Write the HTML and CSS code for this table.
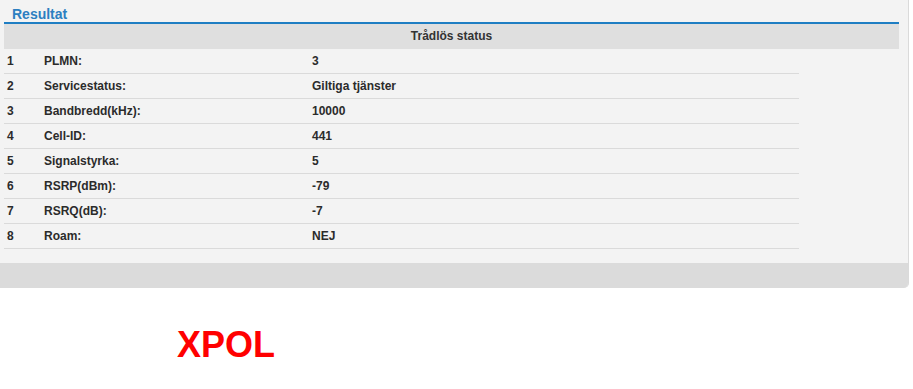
FILE: index.html
```html
<!DOCTYPE html>
<html>
<head>
<meta charset="utf-8">
<link rel="stylesheet" href="styles.css">
</head>
<body>
<div class="panel">
  <div class="title">Resultat</div>
  <div class="section">
    <div class="section-head">Trådlös status</div>
    <table class="grid">
      <tr><td class="num">1</td><td class="label">PLMN:</td><td class="val">3</td></tr>
      <tr><td class="num">2</td><td class="label">Servicestatus:</td><td class="val">Giltiga tjänster</td></tr>
      <tr><td class="num">3</td><td class="label">Bandbredd(kHz):</td><td class="val">10000</td></tr>
      <tr><td class="num">4</td><td class="label">Cell-ID:</td><td class="val">441</td></tr>
      <tr><td class="num">5</td><td class="label">Signalstyrka:</td><td class="val">5</td></tr>
      <tr><td class="num">6</td><td class="label">RSRP(dBm):</td><td class="val">-79</td></tr>
      <tr><td class="num">7</td><td class="label">RSRQ(dB):</td><td class="val">-7</td></tr>
      <tr><td class="num">8</td><td class="label">Roam:</td><td class="val">NEJ</td></tr>
    </table>
  </div>
  <div class="foot"></div>
</div>
<div class="brand">XPOL</div>
</body>
</html>
```
FILE: styles.css
```css
html, body {
  margin: 0;
  padding: 0;
  background: #ffffff;
  font-family: "Liberation Sans", Arial, Helvetica, sans-serif;
}
.panel {
  width: 909px;
  background: #f3f3f3;
  border-right: 1px solid #dadada;
  border-bottom-right-radius: 5px;
  box-sizing: border-box;
  overflow: hidden;
}
.title {
  height: 22px;
  box-sizing: border-box;
  padding: 6px 0 0 12px;
  font-size: 14px;
  font-weight: bold;
  line-height: 16px;
  color: #2c7fc1;
}
.section {
  margin: 0 9px 0 4px;
  padding-bottom: 14px;
}
.section-head {
  border-top: 2px solid #1f7ec3;
  background: #dfdfdf;
  height: 25px;
  line-height: 25px;
  text-align: center;
  font-size: 12px;
  font-weight: bold;
  color: #333333;
}
.grid {
  width: 795px;
  border-collapse: collapse;
  font-size: 12px;
  font-weight: bold;
  color: #2b2b2b;
}
.grid td {
  height: 24px;
  padding: 0;
  border-bottom: 1px solid #dadada;
  vertical-align: middle;
}
.grid .num {
  width: 37px;
  padding-left: 3px;
}
.grid .label {
  width: 268px;
}
.foot {
  height: 25px;
  background: #dbdbdb;
}
.brand {
  margin: 37px 0 0 177px;
  font-size: 36px;
  font-weight: bold;
  line-height: 40px;
  color: #ff0000;
}
```
